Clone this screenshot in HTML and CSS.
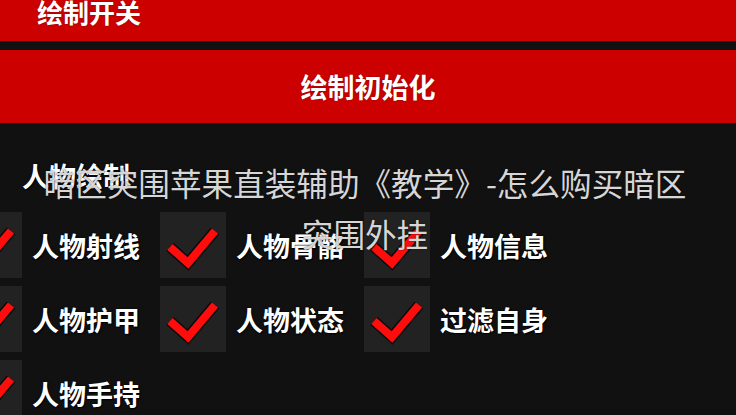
FILE: index.html
```html
<!DOCTYPE html>
<html lang="zh-CN">
<head>
  <meta charset="UTF-8">
  <meta name="viewport" content="width=device-width, initial-scale=1.0">
  <title>暗区突围苹果直装辅助《教学》-怎么购买暗区突围外挂</title>
  <link rel="stylesheet" href="styles.css">
</head>
<body>
  <div class="menu">
    <div class="bar bar-switch">绘制开关</div>
    <div class="bar bar-init">绘制初始化</div>

    <div class="panel">
      <h3 class="panel-title">人物绘制</h3>
      <div class="check-grid">
        <label class="check-item"><span class="check-box"><svg viewBox="0 0 66 66"><polyline class="tick-edge" points="10,35 28,51 55,19"/><polyline class="tick" points="10,35 28,51 55,19"/></svg></span><span class="check-text">人物射线</span></label>
        <label class="check-item"><span class="check-box"><svg viewBox="0 0 66 66"><polyline class="tick-edge" points="10,35 28,51 55,19"/><polyline class="tick" points="10,35 28,51 55,19"/></svg></span><span class="check-text">人物骨骼</span></label>
        <label class="check-item"><span class="check-box"><svg viewBox="0 0 66 66"><polyline class="tick-edge" points="10,35 28,51 55,19"/><polyline class="tick" points="10,35 28,51 55,19"/></svg></span><span class="check-text">人物信息</span></label>
        <label class="check-item"><span class="check-box"><svg viewBox="0 0 66 66"><polyline class="tick-edge" points="10,35 28,51 55,19"/><polyline class="tick" points="10,35 28,51 55,19"/></svg></span><span class="check-text">人物护甲</span></label>
        <label class="check-item"><span class="check-box"><svg viewBox="0 0 66 66"><polyline class="tick-edge" points="10,35 28,51 55,19"/><polyline class="tick" points="10,35 28,51 55,19"/></svg></span><span class="check-text">人物状态</span></label>
        <label class="check-item"><span class="check-box"><svg viewBox="0 0 66 66"><polyline class="tick-edge" points="10,35 28,51 55,19"/><polyline class="tick" points="10,35 28,51 55,19"/></svg></span><span class="check-text">过滤自身</span></label>
        <label class="check-item"><span class="check-box"><svg viewBox="0 0 66 66"><polyline class="tick-edge" points="10,35 28,51 55,19"/><polyline class="tick" points="10,35 28,51 55,19"/></svg></span><span class="check-text">人物手持</span></label>
      </div>
    </div>
  </div>

  <!-- 标题浮在截图上方 -->
  <h1 class="caption">暗区突围苹果直装辅助《教学》-怎么购买暗区突围外挂</h1>
</body>
</html>
```

FILE: styles.css
```css
*{
  margin: 0;
  padding: 0;
  box-sizing: border-box;
  font-family: "Noto Sans CJK SC", "Microsoft Yahei", sans-serif;
}

body{
  width: 736px;
  height: 415px;
  background: #111;
  overflow: hidden;
  position: relative;
}

.bar{
  background: #cd0000;
  color: #fff;
  font-weight: bold;
  font-size: 26px;
  line-height: 26px;
  text-shadow: 0 0 2px rgba(0,0,0,0.4);
  overflow: hidden;
}

.bar-switch{
  height: 41px;
  display: flex;
  align-items: flex-end;
  padding: 0 0 16px 37px;
  margin-bottom: 9px;
}

.bar-init{
  height: 73px;
  display: flex;
  align-items: center;
  justify-content: center;
  font-size: 27px;
}

.panel{
  padding-top: 39px;
}

.panel-title{
  font-size: 27px;
  line-height: 28px;
  font-weight: bold;
  color: #fff;
  padding-left: 22px;
  margin-bottom: 22px;
  text-shadow: 0 0 2px #000, 1px 1px 1px #000;
}

.check-grid{
  display: grid;
  grid-template-columns: repeat(3, 204px);
  grid-auto-rows: 66px;
  row-gap: 8px;
  margin-left: -44px;
}

.check-item{
  display: flex;
  align-items: center;
  gap: 10px;
}

.check-box{
  width: 66px;
  height: 66px;
  background: #222;
  flex-shrink: 0;
}

.check-box svg{
  width: 66px;
  height: 66px;
  display: block;
}

.tick-edge{
  fill: none;
  stroke: #0a0a0a;
  stroke-width: 11;
}

.tick{
  fill: none;
  stroke: #ff0d0d;
  stroke-width: 8;
}

.check-text{
  font-size: 27px;
  font-weight: bold;
  color: #fff;
  white-space: nowrap;
  text-shadow: 0 0 2px #000, 1px 1px 1px #000;
}

.caption{
  position: absolute;
  top: 157px;
  left: 30px;
  width: 670px;
  text-align: center;
  font-size: 31.6px;
  line-height: 51px;
  font-weight: normal;
  color: #d6d6d6;
  text-shadow: 0 0 2px rgba(0,0,0,0.6);
}
```
